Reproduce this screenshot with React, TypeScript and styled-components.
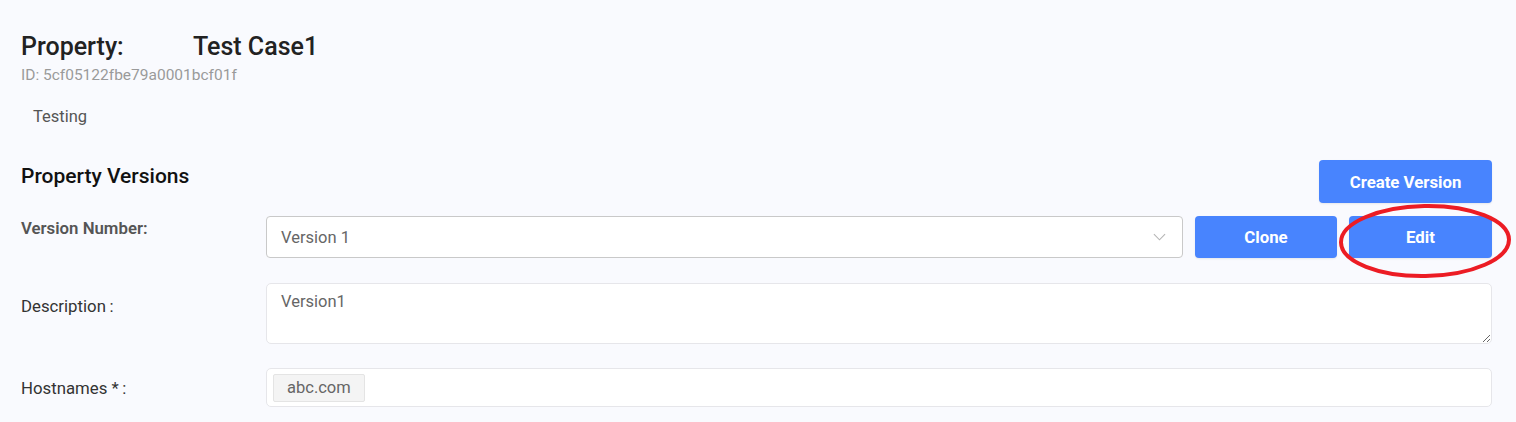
import styled, { createGlobalStyle } from "styled-components";

const GlobalStyle = createGlobalStyle`
  html, body {
    margin: 0;
    padding: 0;
    background: #f9fafe;
    font-family: Roboto, "Liberation Sans", Arial, sans-serif;
  }
`;

export default function App() {
  return (
    <>
      <GlobalStyle />
      <Page>
        <TitleLine>
          <TitleLabel>Property:</TitleLabel>
          <TitleValue>Test Case1</TitleValue>
        </TitleLine>
        <IdLine>ID: 5cf05122fbe79a0001bcf01f</IdLine>
        <Note>Testing</Note>

        <SectionHead>
          <SectionTitle>Property Versions</SectionTitle>
          <Button $width={173} $height={43}>Create Version</Button>
        </SectionHead>

        <FormRow $top={13}>
          <Label $bold $pad={1}>Version Number:</Label>
          <Select>
            <span>Version 1</span>
            <Chevron viewBox="0 0 14 8">
              <path d="M1 1l6 6 6-6" fill="none" stroke="#b5b5b5" strokeWidth="1.2" />
            </Chevron>
          </Select>
          <Button $width={142} $height={42}>Clone</Button>
          <EditWrap>
            <Button $width={143} $height={42}>Edit</Button>
            <Annotation viewBox="0 0 180 80">
              <ellipse
                cx="88"
                cy="39"
                rx="84"
                ry="35"
                fill="none"
                stroke="#ec1c24"
                strokeWidth="4"
                transform="rotate(-1 88 39)"
              />
            </Annotation>
          </EditWrap>
        </FormRow>

        <FormRow $top={25}>
          <Label $pad={12}>Description&thinsp;:</Label>
          <TextArea defaultValue="Version1" />
        </FormRow>

        <FormRow $top={24}>
          <Label $pad={9}>Hostnames *&thinsp;:</Label>
          <TagInput>
            <Tag>abc.com</Tag>
          </TagInput>
        </FormRow>
      </Page>
    </>
  );
}

const Page = styled.div`
  padding: 30px 24px 0 21px;
`;

const TitleLine = styled.div`
  display: flex;
  align-items: center;
  height: 32px;
  font-size: 25px;
  font-weight: 500;
  color: #222;
`;

const TitleLabel = styled.span`
  width: 172px;
`;

const TitleValue = styled.span``;

const IdLine = styled.div`
  margin-top: 3px;
  font-size: 15.5px;
  line-height: 20px;
  color: #9a9a9a;
`;

const Note = styled.div`
  margin-top: 22px;
  padding-left: 12px;
  font-size: 16.5px;
  line-height: 20px;
  color: #555;
`;

const SectionHead = styled.div`
  display: flex;
  justify-content: space-between;
  align-items: flex-start;
  margin-top: 33px;
`;

const SectionTitle = styled.h3`
  margin: 4px 0 0;
  font-size: 21px;
  line-height: 24px;
  font-weight: 500;
  color: #111;
`;

const Button = styled.button<{ $width: number; $height: number }>`
  width: ${(p) => p.$width}px;
  height: ${(p) => p.$height}px;
  border: none;
  border-radius: 4px;
  background: #4884fe;
  color: #fff;
  font-family: inherit;
  font-size: 16.8px;
  font-weight: 700;
  box-shadow: 0 1px 2px rgba(0, 0, 0, 0.08);
  flex-shrink: 0;
`;

const FormRow = styled.div<{ $top: number }>`
  display: flex;
  align-items: flex-start;
  gap: 12px;
  margin-top: ${(p) => p.$top}px;
`;

const Label = styled.div<{ $bold?: boolean; $pad: number }>`
  width: 233px;
  flex-shrink: 0;
  padding-top: ${(p) => p.$pad}px;
  font-size: 16.8px;
  line-height: 22px;
  font-weight: ${(p) => (p.$bold ? 600 : 400)};
  color: ${(p) => (p.$bold ? "#555" : "#333")};
`;

const Select = styled.div`
  flex: 1;
  height: 42px;
  box-sizing: border-box;
  display: flex;
  align-items: center;
  justify-content: space-between;
  padding: 0 16px 0 14px;
  border: 1px solid #c9c9c9;
  border-radius: 4px;
  background: #fff;
  font-size: 16.5px;
  color: #666;
`;

const Chevron = styled.svg`
  width: 13px;
  height: 8px;
`;

const EditWrap = styled.div`
  position: relative;
  display: flex;
`;

const Annotation = styled.svg`
  position: absolute;
  left: -12px;
  top: -14px;
  width: 180px;
  height: 80px;
  pointer-events: none;
  overflow: visible;
`;

const TextArea = styled.textarea`
  flex: 1;
  height: 61px;
  box-sizing: border-box;
  margin: 0;
  padding: 8px 14px;
  border: 1px solid #e6e6ea;
  border-radius: 5px;
  background: #fff;
  font-family: inherit;
  font-size: 16.5px;
  color: #666;
  outline: none;
`;

const TagInput = styled.div`
  flex: 1;
  height: 39px;
  box-sizing: border-box;
  display: flex;
  align-items: center;
  padding: 0 6px;
  border: 1px solid #e6e6ea;
  border-radius: 5px;
  background: #fff;
`;

const Tag = styled.span`
  display: inline-flex;
  align-items: center;
  height: 28px;
  padding: 0 13px;
  box-sizing: border-box;
  border: 1px solid #e4e4e4;
  border-radius: 2px;
  background: #f4f4f4;
  font-size: 16.5px;
  color: #666;
`;
